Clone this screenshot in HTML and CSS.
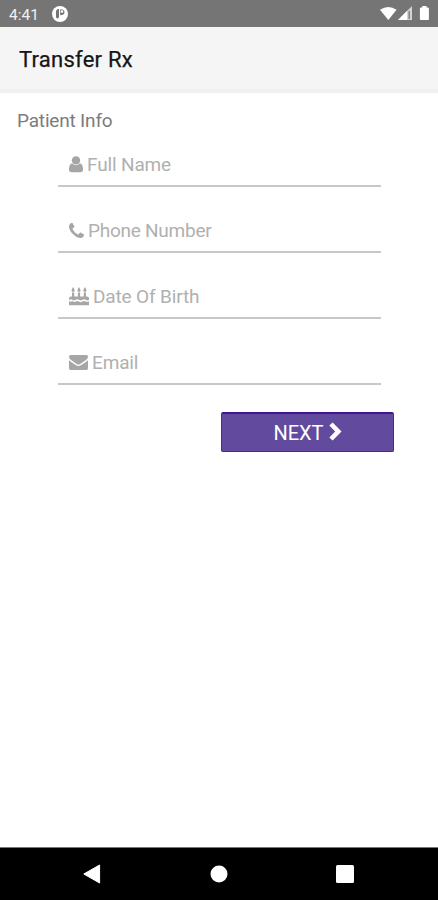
FILE: index.html
```html
<!DOCTYPE html>
<html lang="en">
<head>
<meta charset="utf-8">
<title>Transfer Rx</title>
<link rel="stylesheet" href="styles.css">
</head>
<body>
<div class="screen">
  <div class="status">
    <span class="clock">4:41</span>
    <svg class="app" width="16" height="16" viewBox="0 0 16 16"><circle cx="8" cy="8" r="8" fill="#fff"/><path d="M5.800 3Q4 3.600 4 5.500v5.200q0 1.800 1.500 1.800T7 10.700V3zM8.200 3.300v6q4.300 0 4.300-3T8.200 3.300z" fill="#757575"/><circle cx="10" cy="5.500" r="1.300" fill="#fff"/></svg>
    <svg class="signals" width="50" height="16" viewBox="0 0 50 16"><path d="M0 3.800Q8.300-2 16.600 3.800L8.300 14z" fill="#fff"/><path d="M32 0v14H18z" fill="#d4d4d4"/><path d="M27 5v9h-9z" fill="#fff"/><path d="M29.200 5v8" stroke="#777" stroke-width="1.300"/><path d="M42.300 0h4.200v1.500h1.200q1.200 0 1.200 1.200v10.200q0 1.200-1.200 1.200h-6.600q-1.200 0-1.200-1.200V2.700q0-1.200 1.200-1.200h1.200z" fill="#fff"/></svg>
  </div>
  <header class="bar"><h1>Transfer Rx</h1></header>
  <main class="content">
    <h2>Patient Info</h2>
    <form class="form">
      <label class="field name">
        <svg width="14" height="17" viewBox="0 0 14 17"><circle cx="7" cy="4.400" r="4.200"/><path d="M3 7.300Q5 9.300 7 9.300t4-2Q14 8 14 13.500q0 2.800-2.700 2.800H2.700Q0 16.300 0 13.500 0 8 3 7.300z"/></svg>
        <span>Full Name</span>
      </label>
      <label class="field phone">
        <svg width="15" height="15" viewBox="0 0 1408 1408"><path d="M1408 1112q0 27-10 70.500t-21 68.500q-21 50-122 106-94 51-186 51-27 0-53-3.500t-57.500-12.500-47-14.500-55.500-20.500-49-18q-98-35-175-83-127-79-264-216T152 776q-48-77-83-175-3-9-18-49t-20.500-55.500-14.500-47T3.500 392 0 339q0-92 51-186Q107 52 157 31q25-11 68.500-21T296 0q14 0 21 3 18 6 53 76 11 19 30 54t35 63.500 31 53.500q3 4 17.500 25t21.500 35.500 7 28.500q0 20-28.500 50t-62 55-62 53-28.500 46q0 9 5 22.500t8.500 20.500 14 24 11.500 19q76 137 174 235t235 174q2 1 19 11.500t24 14 20.500 8.500 22.500 5q18 0 46-28.500t53-62 55-62 50-28.500q14 0 28.500 7t35.500 21.500 25 17.500q25 15 53.500 31t63.500 35 54 30q70 35 76 53 3 7 3 21z"/></svg>
        <span>Phone Number</span>
      </label>
      <label class="field birth">
        <svg width="20" height="19" viewBox="0 0 20 19"><path d="M3 5.500h2.200V10H3zM8.900 5.500h2.200V10H8.900zM14.800 5.500H17V10h-2.200zM4.100 0q3.200 4.900 0 4.900T4.100 0zM10 0q3.200 4.900 0 4.900T10 0zM15.900 0q3.200 4.900 0 4.900t0-4.900z"/><path d="M0 12.800V11.500Q0 9.500 2 9.500h16q2 0 2 2v1.300q-1.300 1.300-3.200 0-1.700-1.300-3.400 0-1.700 1.300-3.400 0-1.700-1.300-3.400 0-1.700 1.300-3.400 0-1.700-1.300-3.400.6Q1 13.800 0 12.800zM0 14.300q1.700.9 3.300-.3 1.700 1.700 3.400.6 1.700-1.400 3.300 0 1.700 1.100 3.400 0 1.700-1.400 3.400 0 1.500.7 3.200-.3v4H0z"/></svg>
        <span>Date Of Birth</span>
      </label>
      <label class="field email">
        <svg width="19" height="15" viewBox="0 0 19 15"><path d="M1.700 0h15.600Q19 0 19 1.700 19 3.500 17 5l-5.700 4q-1.800 1.200-3.600 0L2 5Q0 3.500 0 1.700 0 0 1.700 0zM0 5.200q.8.800 6.700 4.900 2.800 1.900 5.600 0Q18.200 6 19 5.200v8.100q0 1.700-1.700 1.700H1.700Q0 15 0 13.300z"/></svg>
        <span>Email</span>
      </label>
      <button class="next" type="button"><span>NEXT</span><svg width="13" height="19" viewBox="0 0 13 19"><path d="M2 2l7.300 7.500L2 17" fill="none" stroke="#fff" stroke-width="4.600"/></svg></button>
    </form>
  </main>
  <nav class="nav">
    <svg width="18" height="20" viewBox="0 0 18 20"><path d="M16.600 1v18L.8 10z" fill="#fff" stroke="#fff" stroke-linejoin="round"/></svg>
    <svg width="18" height="18" viewBox="0 0 18 18"><circle cx="9" cy="9" r="8.500" fill="#fff"/></svg>
    <svg width="18" height="18" viewBox="0 0 18 18"><rect width="18" height="18" rx="1.500" fill="#fff"/></svg>
  </nav>
</div>
</body>
</html>
```
FILE: styles.css
```css
* { box-sizing: border-box; }
body { margin: 0; font-family: Roboto, "Liberation Sans", sans-serif; background: #fff; }
h1, h2 { margin: 0; }
svg { display: block; flex: none; }
.screen { width: 438px; height: 900px; display: flex; flex-direction: column; overflow: hidden; }
.status { height: 27px; flex: none; background: #757575; display: flex; align-items: center; padding: 1px 8px 0 9px; color: #f0f0f0; }
.clock { font-size: 15.5px; width: 43px; line-height: 20px; padding-top: 1px; }
.signals { margin-left: auto; }
.bar { height: 66px; flex: none; background: #f5f5f5; border-bottom: 4px solid #f0f0f0; padding: 4px 19px 0; display: flex; align-items: center; }
h1 { font-size: 22px; font-weight: 400; color: #161616; -webkit-text-stroke: .25px #161616; line-height: 26px; letter-spacing: .25px; }
.content { flex: 1; padding-top: 16px; }
h2 { font-size: 19px; line-height: 24px; font-weight: 400; color: #7c7c7c; padding-left: 17px; letter-spacing: -.18px; }
.form { padding: 0 57px 0 58px; display: flex; flex-direction: column; }
.field { height: 66px; border-bottom: 2px solid #c8c8c8; display: flex; align-items: center; padding: 23px 0 0 11px; gap: 4px; color: #b0b0b0; font-size: 19px; font-weight: 400; line-height: 24px; letter-spacing: -.15px; }
.field svg { fill: #a6a6a6; }
.field.name { height: 54px; padding-top: 11px; }
.field.phone { letter-spacing: -.25px; }
.next { width: 173px; height: 40px; margin: 27px -13px 0 auto; padding: 0; border: 1px solid #4b2894; border-top: 2px solid #431492; border-radius: 2px; background: #624b9e; color: #fff; font-family: inherit; font-size: 20px; display: flex; align-items: center; justify-content: center; gap: 5px; }
.next svg { margin-top: -2px; }
.nav { height: 53px; flex: none; background: #000; border-top: 1px solid #777; display: flex; align-items: center; justify-content: space-between; padding: 0 84px 0 83px; }
```
